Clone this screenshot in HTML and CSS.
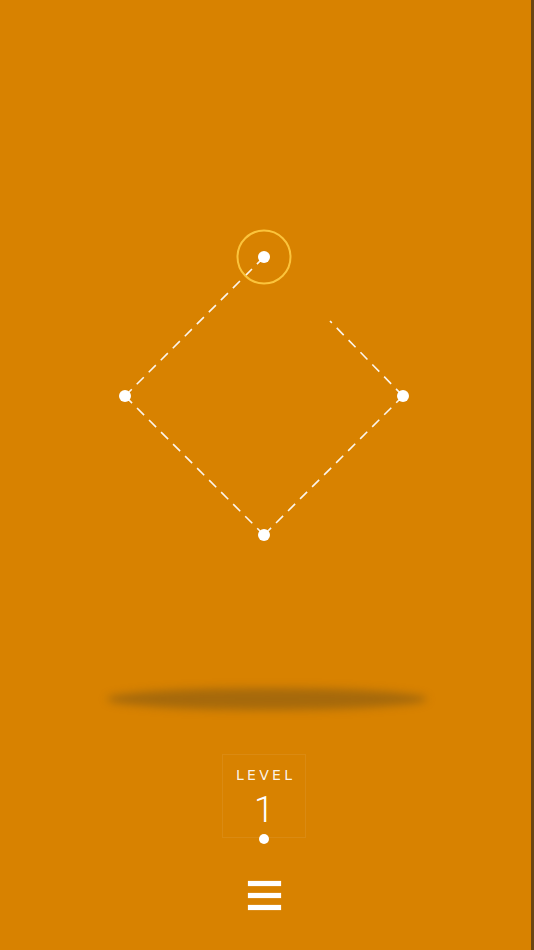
FILE: index.html
```html
<!DOCTYPE html>
<html>
<head>
<meta charset="utf-8">
<link rel="stylesheet" href="styles.css">
</head>
<body>
<div class="screen">
  <svg class="stage" width="531" height="560" viewBox="0 0 531 560">
    <g class="links">
      <line x1="264" y1="257" x2="125" y2="396"/>
      <line x1="125" y1="396" x2="264" y2="535"/>
      <line x1="264" y1="535" x2="403" y2="396"/>
      <line x1="403" y1="396" x2="330" y2="321"/>
    </g>
    <circle class="ring" cx="264" cy="257" r="26.5"/>
    <g class="nodes">
      <circle cx="264" cy="257" r="6"/>
      <circle cx="125" cy="396" r="6"/>
      <circle cx="403" cy="396" r="6"/>
      <circle cx="264" cy="535" r="6"/>
    </g>
  </svg>
  <div class="shadow"></div>
  <div class="level">
    <div class="level-label">LEVEL</div>
    <div class="level-num">1</div>
    <div class="level-dot"></div>
  </div>
  <div class="menu">
    <span class="bar"></span>
    <span class="bar"></span>
    <span class="bar"></span>
  </div>
</div>
</body>
</html>
```
FILE: styles.css
```css
html, body {
  margin: 0;
  padding: 0;
  background: #d88200;
}
.screen {
  width: 534px;
  height: 950px;
  box-sizing: border-box;
  border-right: 3px solid #6a4512;
  background: #d88200;
  display: flex;
  flex-direction: column;
  align-items: center;
  padding-right: 3px;
  overflow: hidden;
}
.stage {
  display: block;
  flex: none;
  margin-left: 3px;
}
.links line {
  stroke: rgba(255, 255, 255, 0.92);
  stroke-width: 1.6;
  stroke-dasharray: 10 7;
}
.ring {
  fill: none;
  stroke: #fbc43c;
  stroke-width: 2;
}
.nodes circle {
  fill: #ffffff;
}
.shadow {
  flex: none;
  width: 320px;
  height: 22px;
  margin-top: 128px;
  margin-left: 6px;
  border-radius: 50%;
  background: rgba(125, 85, 20, 0.55);
  filter: blur(4px);
}
.level {
  flex: none;
  width: 84px;
  height: 84px;
  margin-top: 44px;
  box-sizing: border-box;
  border: 1px solid rgba(255, 255, 255, 0.07);
  display: flex;
  flex-direction: column;
  align-items: center;
  padding-top: 11px;
  font-family: "DejaVu Sans", sans-serif;
  color: #ffffff;
}
.level > * {
  flex: none;
}
.level-label {
  font-size: 14px;
  line-height: 18px;
  font-weight: 400;
  letter-spacing: 3.3px;
  margin-left: 3.3px;
  color: rgba(255, 255, 255, 0.92);
}
.level-num {
  font-family: Roboto, sans-serif;
  font-weight: 300;
  font-size: 36px;
  line-height: 34px;
  margin-top: 9px;
}
.level-dot {
  width: 10px;
  height: 10px;
  border-radius: 50%;
  background: #ffffff;
  margin-top: 7px;
}
.menu {
  flex: none;
  margin-top: 43px;
  display: flex;
  flex-direction: column;
  gap: 7px;
}
.bar {
  display: block;
  width: 33px;
  height: 5px;
  background: #ffffff;
  box-shadow: 0 0 1px rgba(255, 255, 255, 0.6);
}
```
